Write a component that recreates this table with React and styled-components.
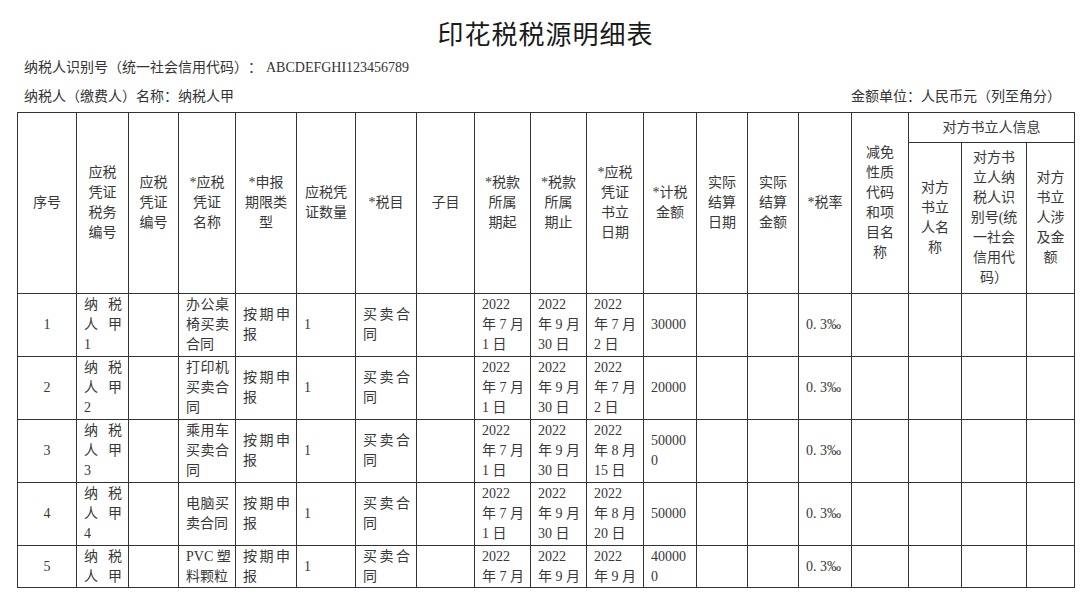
import React from 'react';
import styled, { createGlobalStyle } from 'styled-components';

const Global = createGlobalStyle`
  html, body { margin: 0; padding: 0; background: #fff; }
  body {
    font-family: "Liberation Serif", "Noto Sans CJK SC", serif;
    color: #333;
    text-spacing-trim: space-all;
  }
`;

const Page = styled.div`
  width: 1080px;
  height: 592px;
  overflow: hidden;
  box-sizing: border-box;
  padding: 14px 6px 0 17px;
`;

const Title = styled.h1`
  margin: 0;
  height: 38px;
  line-height: 38px;
  text-align: center;
  font-family: "Noto Sans CJK SC", sans-serif;
  font-size: 26px;
  font-weight: 400;
  letter-spacing: 1px;
  color: #1a1a1a;
`;

const InfoLine = styled.div`
  display: flex;
  justify-content: space-between;
  margin-top: ${(p) => p.$gap}px;
  padding: 0 13px 0 7px;
  font-size: 14px;
  line-height: 24px;
  color: #333;
  white-space: nowrap;
`;

const Code = styled.span`
  margin-left: 4px;
`;

const Table = styled.div`
  display: grid;
  grid-template-columns: ${(p) => p.$cols.map((w) => `${w}px`).join(' ')};
  grid-template-rows: ${(p) => p.$rows.map((h) => `${h}px`).join(' ')};
  margin-top: 3px;
  border-top: 1px solid #333;
  border-left: 1px solid #333;
  width: max-content;
  font-size: 14px;
  line-height: 20px;
`;

const CellBox = styled.div`
  box-sizing: border-box;
  border-right: 1px solid #333;
  border-bottom: 1px solid #333;
  display: flex;
  flex-direction: column;
  overflow: hidden;
  padding: ${(p) => (p.$center ? '0 2px' : '0 6px 0 7px')};
  text-align: ${(p) => (p.$center ? 'center' : 'left')};
  grid-column: ${(p) => (p.$colSpan ? `span ${p.$colSpan}` : 'auto')};
  grid-row: ${(p) => (p.$rowSpan ? `span ${p.$rowSpan}` : 'auto')};
  color: #383838;
`;

const Lines = styled.div`
  margin: auto 0;
`;

const Line = styled.span`
  display: block;
  white-space: nowrap;
  text-align-last: ${(p) => (p.$spread ? 'justify' : 'auto')};
`;

function Cell({ lines, center, spread, colSpan, rowSpan }) {
  const list = Array.isArray(lines) ? lines : lines ? [lines] : [];
  const spreadLine = (l, i) => {
    if (!spread || list.length < 2) return false;
    if (spread === 'all') return l.length > 1;
    return i < list.length - 1;
  };
  return (
    <CellBox $center={center} $colSpan={colSpan} $rowSpan={rowSpan}>
      <Lines>
        {list.map((l, i) => (
          <Line key={i} $spread={spreadLine(l, i)}>
            {l}
          </Line>
        ))}
      </Lines>
    </CellBox>
  );
}

const colWidths = [59, 52, 50, 57, 61, 59, 61, 58, 56, 56, 57, 53, 51, 51, 53, 57, 53, 65, 48];
const rowHeights = [30, 151, 63, 63, 63, 63, 42];

const headers = [
  ['序号'],
  ['应税', '凭证', '税务', '编号'],
  ['应税', '凭证', '编号'],
  ['*应税', '凭证', '名称'],
  ['*申报', '期限类', '型'],
  ['应税凭', '证数量'],
  ['*税目'],
  ['子目'],
  ['*税款', '所属', '期起'],
  ['*税款', '所属', '期止'],
  ['*应税', '凭证', '书立', '日期'],
  ['*计税', '金额'],
  ['实际', '结算', '日期'],
  ['实际', '结算', '金额'],
  ['*税率'],
  ['减免', '性质', '代码', '和项', '目名', '称'],
];

const subHeaders = [
  ['对方', '书立', '人名', '称'],
  ['对方书', '立人纳', '税人识', '别号(统', '一社会', '信用代', '码）'],
  ['对方', '书立', '人涉', '及金', '额'],
];

// column behaviour for data rows
const colKinds = [
  { center: true },
  { spread: 'all' },
  {},
  { spread: true },
  { spread: true },
  {},
  { spread: true },
  {},
  {},
  {},
  {},
  {},
  {},
  {},
  {},
  {},
  {},
  {},
  {},
];

const rows = [
  ['1', ['纳税', '人甲', '1'], '', ['办公桌', '椅买卖', '合同'], ['按期申', '报'], '1', ['买卖合', '同'], '',
    ['2022', '年 7 月', '1 日'], ['2022', '年 9 月', '30 日'], ['2022', '年 7 月', '2 日'], '30000', '', '', '0. 3‰', '', '', '', ''],
  ['2', ['纳税', '人甲', '2'], '', ['打印机', '买卖合', '同'], ['按期申', '报'], '1', ['买卖合', '同'], '',
    ['2022', '年 7 月', '1 日'], ['2022', '年 9 月', '30 日'], ['2022', '年 7 月', '2 日'], '20000', '', '', '0. 3‰', '', '', '', ''],
  ['3', ['纳税', '人甲', '3'], '', ['乘用车', '买卖合', '同'], ['按期申', '报'], '1', ['买卖合', '同'], '',
    ['2022', '年 7 月', '1 日'], ['2022', '年 9 月', '30 日'], ['2022', '年 8 月', '15 日'], ['50000', '0'], '', '', '0. 3‰', '', '', '', ''],
  ['4', ['纳税', '人甲', '4'], '', ['电脑买', '卖合同'], ['按期申', '报'], '1', ['买卖合', '同'], '',
    ['2022', '年 7 月', '1 日'], ['2022', '年 9 月', '30 日'], ['2022', '年 8 月', '20 日'], '50000', '', '', '0. 3‰', '', '', '', ''],
  ['5', ['纳税', '人甲'], '', ['PVC 塑', '料颗粒'], ['按期申', '报'], '1', ['买卖合', '同'], '',
    ['2022', '年 7 月'], ['2022', '年 9 月'], ['2022', '年 9 月'], ['40000', '0'], '', '', '0. 3‰', '', '', '', ''],
];

export default function App() {
  return (
    <>
      <Global />
      <Page>
        <Title>印花税税源明细表</Title>
        <InfoLine $gap={4}>
          <span>
            纳税人识别号（统一社会信用代码）：<Code>ABCDEFGHI123456789</Code>
          </span>
        </InfoLine>
        <InfoLine $gap={5}>
          <span>纳税人（缴费人）名称：纳税人甲</span>
          <span>金额单位：人民币元（列至角分）</span>
        </InfoLine>
        <Table $cols={colWidths} $rows={rowHeights}>
          {headers.map((h, i) => (
            <Cell key={`h${i}`} lines={h} center rowSpan={2} />
          ))}
          <Cell lines="对方书立人信息" center colSpan={3} />
          {subHeaders.map((h, i) => (
            <Cell key={`s${i}`} lines={h} center />
          ))}
          {rows.map((r, ri) =>
            r.map((c, ci) => (
              <Cell
                key={`r${ri}c${ci}`}
                lines={c}
                center={colKinds[ci].center}
                spread={colKinds[ci].spread}
              />
            ))
          )}
        </Table>
      </Page>
    </>
  );
}
